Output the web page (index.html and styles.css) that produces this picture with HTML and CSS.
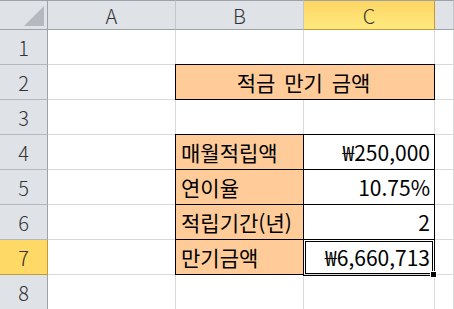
FILE: index.html
```html
<!DOCTYPE html>
<html lang="ko">
<head>
    <meta charset="UTF-8">
    <title>적금 만기 금액</title>
    <link rel="stylesheet" href="styles.css">
</head>
<body>
    <div class="sheet">
        <!-- column headers -->
        <div class="corner"><span class="corner-mark"></span></div>
        <div class="col-head">A</div>
        <div class="col-head">B</div>
        <div class="col-head active">C</div>
        <div class="col-head"></div>

        <!-- row 1 -->
        <div class="row-head">1</div>
        <div class="cell"></div>
        <div class="cell"></div>
        <div class="cell"></div>
        <div class="cell"></div>

        <!-- row 2: title across B:C -->
        <div class="row-head">2</div>
        <div class="cell"></div>
        <div class="cell title boxed">적금 만기 금액</div>
        <div class="cell"></div>

        <!-- row 3 -->
        <div class="row-head">3</div>
        <div class="cell"></div>
        <div class="cell"></div>
        <div class="cell"></div>
        <div class="cell"></div>

        <!-- row 4 -->
        <div class="row-head">4</div>
        <div class="cell"></div>
        <div class="cell label boxed">매월적립액</div>
        <div class="cell value boxed">₩250,000</div>
        <div class="cell"></div>

        <!-- row 5 -->
        <div class="row-head">5</div>
        <div class="cell"></div>
        <div class="cell label boxed">연이율</div>
        <div class="cell value boxed">10.75%</div>
        <div class="cell"></div>

        <!-- row 6 -->
        <div class="row-head">6</div>
        <div class="cell"></div>
        <div class="cell label boxed">적립기간(년)</div>
        <div class="cell value boxed">2</div>
        <div class="cell"></div>

        <!-- row 7 -->
        <div class="row-head active">7</div>
        <div class="cell"></div>
        <div class="cell label boxed">만기금액</div>
        <div class="cell value boxed selected">₩6,660,713</div>
        <div class="cell"></div>

        <!-- row 8 -->
        <div class="row-head">8</div>
        <div class="cell"></div>
        <div class="cell"></div>
        <div class="cell"></div>
        <div class="cell"></div>
    </div>
</body>
</html>
```

FILE: styles.css
```css
* {
    box-sizing: border-box;
}

body {
    margin: 0;
    background: #fff;
    overflow: hidden;
    font-family: "Noto Sans CJK KR", "Noto Sans", sans-serif;
}

.sheet {
    display: grid;
    grid-template-columns: 48px 128px 128px 131px 1fr;
    grid-template-rows: 30px repeat(8, 35px);
    width: 454px;
    height: 309px;
}

/* header strip */
.corner,
.col-head,
.row-head {
    background: #dfe2e7;
    color: #333;
    font-size: 20px;
    font-weight: 300;
    display: flex;
    align-items: center;
    justify-content: center;
}

.corner,
.col-head {
    border-top: 1px solid #9da2a9;
    border-bottom: 1px solid #9da2a9;
    border-right: 1px solid #c3c7cc;
}

.corner {
    position: relative;
    border-right-color: #9da2a9;
}

.corner-mark {
    position: absolute;
    right: 3px;
    bottom: 3px;
    width: 20px;
    height: 20px;
    background: #b4b9bf;
    clip-path: polygon(100% 0, 100% 100%, 0 100%);
}

.row-head {
    border-right: 1px solid #9da2a9;
    border-bottom: 1px solid #b3b8be;
}

.col-head.active {
    background: linear-gradient(#fdd563, #ffea80);
    border-bottom-color: #c29a3c;
    border-right-color: #c29a3c;
}

.row-head.active {
    background: #ffd966;
    border-bottom-color: #c29a3c;
    border-right-color: #c29a3c;
}

/* body cells */
.cell {
    border-right: 1px solid #d9d9d9;
    border-bottom: 1px solid #d9d9d9;
    color: #000;
    font-size: 21px;
    display: flex;
    align-items: center;
    padding: 0 4px 0 5px;
    white-space: nowrap;
}

.boxed {
    position: relative;
}

/* thin black outline drawn over the gridlines on every side */
.boxed::after {
    content: "";
    position: absolute;
    inset: -1px;
    border: 1px solid #000;
    pointer-events: none;
}

.title {
    grid-column: span 2;
    justify-content: center;
    background: #ffcc99;
    word-spacing: 3px;
    padding-right: 8px;
}

.label {
    background: #ffcc99;
}

.value {
    justify-content: flex-end;
}

/* active cell frame with the fill handle */
.selected::after {
    inset: -1px -1px -2px -1px;
    border: 3px double #000;
}

.selected::before {
    content: "";
    position: absolute;
    right: -3px;
    bottom: -4px;
    width: 5px;
    height: 5px;
    background: #000;
    border: 1px solid #fff;
    z-index: 1;
}
```
